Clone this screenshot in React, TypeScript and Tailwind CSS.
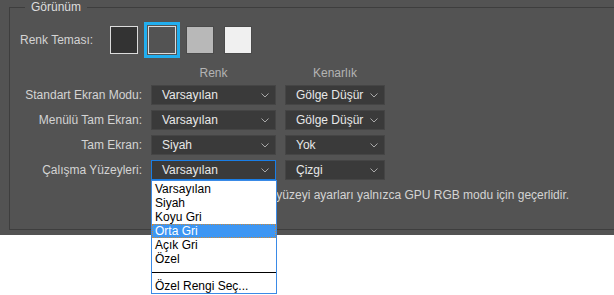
import React from 'react';

const swatches = [
  { fill: 'bg-[#333333]', border: 'border-[#dcdcdc]', selected: false },
  { fill: 'bg-[#535353]', border: 'border-[#dcdcdc]', selected: true },
  { fill: 'bg-[#b8b8b8]', border: 'border-[#4a4a4a]', selected: false },
  { fill: 'bg-[#f0f0f0]', border: 'border-[#4a4a4a]', selected: false },
];

const rows = [
  { label: 'Standart Ekran Modu:', color: 'Varsayılan', border: 'Gölge Düşür' },
  { label: 'Menülü Tam Ekran:', color: 'Varsayılan', border: 'Gölge Düşür' },
  { label: 'Tam Ekran:', color: 'Siyah', border: 'Yok' },
  { label: 'Çalışma Yüzeyleri:', color: 'Varsayılan', border: 'Çizgi', open: true },
];

const options = ['Varsayılan', 'Siyah', 'Koyu Gri', 'Orta Gri', 'Açık Gri', 'Özel'];

function Chevron() {
  return (
    <svg width="8" height="5" viewBox="0 0 8 5" className="shrink-0">
      <polyline points="0.5,0.5 4,4 7.5,0.5" fill="none" stroke="#a8a8a8" strokeWidth="1" />
    </svg>
  );
}

function Select({ value, width, focused }: { value: string; width: string; focused?: boolean }) {
  return (
    <div
      className={`${width} h-[20px] flex items-center justify-between pl-[10px] pr-[6px] bg-[#3a3a3a] border ${
        focused ? 'border-[#1a7ee6]' : 'border-[#454545]'
      } text-[#e8e8e8]`}
    >
      <span>{value}</span>
      <Chevron />
    </div>
  );
}

function DropdownList() {
  return (
    <div className="absolute left-0 top-[20px] w-[126px] bg-white border border-[#3a8ae6] text-black z-10">
      <div className="h-px" />
      {options.map((o) => (
        <div
          key={o}
          className={`h-[14px] leading-[14px] pl-[3px] ${
            o === 'Orta Gri' ? 'bg-[#3d96f3] text-white outline outline-1 outline-dotted outline-[#c98a3c] -outline-offset-1' : ''
          }`}
        >
          {o}
        </div>
      ))}
      <div className="h-[13px] flex items-center">
        <div className="w-full h-px bg-black" />
      </div>
      <div className="h-[14px] leading-[14px] pl-[3px]">Özel Rengi Seç...</div>
    </div>
  );
}

export default function App() {
  return (
    <div className="w-[614px] h-[295px] bg-white text-[12px] font-['Liberation_Sans',Arial,sans-serif] overflow-hidden">
      <div className="h-[235px] bg-[#535353] pl-[9px]">
        <fieldset className="h-[230px] border border-r-0 border-[#3e3e3e]">
          <legend className="ml-[15px] px-[6px] leading-[14px] text-[#dedede]">Görünüm</legend>

          {/* Renk Teması */}
          <div className="flex items-center pl-[10px] mt-[8px] h-[36px]">
            <span className="w-[86px] text-[#d4d4d4]">Renk Teması:</span>
            <div className="flex gap-[2px]">
              {swatches.map((s, i) => (
                <div
                  key={i}
                  className={`w-[36px] h-[36px] flex items-center justify-center border-[3px] ${
                    s.selected ? 'border-[#22aeee]' : 'border-transparent'
                  }`}
                >
                  <div className={`w-[28px] h-[28px] border ${s.fill} ${s.border}`} />
                </div>
              ))}
            </div>
          </div>

          {/* Renk / Kenarlık */}
          <div className="grid grid-cols-[132px_125px_100px] gap-x-[9px] gap-y-[5px] mt-[8px]">
            <div />
            <div className="text-center leading-[14px] text-[#b4b4b4]">Renk</div>
            <div className="text-center leading-[14px] text-[#b4b4b4]">Kenarlık</div>

            {rows.map((r) => (
              <React.Fragment key={r.label}>
                <div className="h-[20px] flex items-center justify-end text-[#d4d4d4]">{r.label}</div>
                <div className="relative">
                  <Select value={r.color} width="w-[125px]" focused={r.open} />
                  {r.open && <DropdownList />}
                </div>
                <Select value={r.border} width="w-[100px]" />
              </React.Fragment>
            ))}

            <div />
            <div className="col-span-2 mt-[3px] leading-[14px] whitespace-nowrap text-[#d4d4d4]">
              <span className="inline-block w-[122px] text-right">Not: Çalışma</span> yüzeyi ayarları yalnızca GPU RGB modu için geçerlidir.
            </div>
          </div>
        </fieldset>
      </div>
    </div>
  );
}
